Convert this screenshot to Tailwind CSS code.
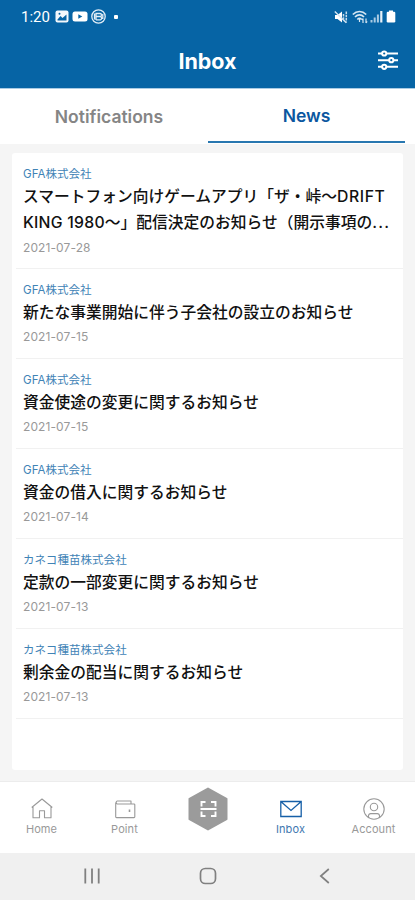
<!DOCTYPE html>
<html lang="ja">
<head>
<meta charset="utf-8">
<meta name="viewport" content="width=device-width, initial-scale=1">
<title>Inbox</title>
<script src="https://cdn.jsdelivr.net/npm/@tailwindcss/browser@4"></script>
</head>
<body class="flex h-[900px] w-[415px] flex-col overflow-hidden bg-[#f5f5f5] font-['Inter','Noto_Sans_CJK_JP',sans-serif]">
  <header class="h-[88px] shrink-0 bg-[#0664a5] text-white">
    <!-- Status bar -->
    <div class="flex h-[33px] items-center justify-between pl-[21px] pr-[19px]">
      <div class="flex items-center font-['Roboto',sans-serif]">
        <span class="w-[34px] text-[15px] leading-[18px]">1:20</span>
        <svg class="h-[13px] w-[14px]" viewBox="0 0 14 13"><rect x=".5" y=".5" width="13" height="12" rx="2" fill="#f3f8fc"/><path d="M2.5 9.5 5.5 6l2 2 4-3.500V10.500h-9z" fill="#0664a5"/><circle cx="4.500" cy="3.700" r="1" fill="#0664a5"/></svg>
        <svg class="ml-[3px] h-[11px] w-[16px]" viewBox="0 0 16 11"><rect x=".5" y=".5" width="15" height="10" rx="2.500" fill="#fff"/><path d="M6.300 3.300v4.400l4-2.200z" fill="#0664a5"/></svg>
        <svg class="ml-[3px] h-[15px] w-[15px]" viewBox="0 0 15 15" fill="none" stroke="#e3eef7" stroke-width="1.300"><circle cx="7.500" cy="7.500" r="6.700"/><path d="M5 11V4.500h4a1.500 1.500 0 0 1 0 3H5h4.300a1.700 1.700 0 0 1 0 3.300H5M3.500 4.500v6M11.800 5v5"/></svg>
        <span class="ml-[8px] h-1 w-1 rounded-[1px] bg-white"></span>
      </div>
      <div class="flex items-center">
        <svg class="h-[14px] w-[14px]" viewBox="0 0 14 14"><path d="M1 5h2.500L8 1.500v11L3.500 9H1z" fill="#fff"/><path d="m.8 1.500 11.500 11.300" stroke="#d8e8f4" stroke-width="1.400"/><path d="M9.500 4v6M12.300 1.500v11" fill="none" stroke="#c4dbec" stroke-width="1.500" stroke-dasharray="2.500 .8"/></svg>
        <svg class="ml-1 h-[14px] w-[16px]" viewBox="0 0 16 14" fill="none" stroke="#d6e6f2" stroke-width="1.700"><path d="M.8 4.500c4-4 9.400-4 13.400 0M3 7c2.700-2.800 6.300-2.800 9 0M5.300 9.500c1.400-1.300 3-1.300 4.400 0"/><path d="M7.500 9v3M11 13V8.500m0 0L9.800 10M14 8.500V13m0 0 1.200-1.500" stroke-width="1.200"/></svg>
        <svg class="ml-[2px] h-[13px] w-[13px]" viewBox="0 0 13 13" fill="#a9cbe4"><rect x=".5" y="10" width="2" height="2.500"/><rect x="3.700" y="7.500" width="2" height="5"/><rect x="6.900" y="4.500" width="2" height="8"/><rect x="10.200" y="1" width="2.200" height="11.500" fill="#e6f1f8"/></svg>
        <svg class="ml-[3px] h-[13px] w-[10px]" viewBox="0 0 10 13" fill="#fff"><rect x="3" y=".5" width="4" height="2.500"/><rect x=".7" y="1.800" width="8.600" height="10.700" rx="1.200"/></svg>
      </div>
    </div>
    <!-- Title bar -->
    <div class="grid h-[55px] grid-cols-[1fr_auto_1fr] items-center">
      <h1 class="col-start-2 pt-px text-[21.5px] font-bold leading-7">Inbox</h1>
      <svg class="mr-[17px] h-[22px] w-[20px] -translate-y-px justify-self-end" viewBox="0 0 20 22" fill="none" stroke="#fff" stroke-width="2"><path d="M0 4.500h4M8.500 4.500H20M0 11.200h11M15.500 11.200H20M0 17.800h4M8.500 17.800H20"/><circle cx="6.200" cy="4.500" r="2.100"/><circle cx="13.300" cy="11.200" r="2.100"/><circle cx="6.200" cy="17.800" r="2.100"/></svg>
    </div>
  </header>

  <nav class="flex h-[56px] shrink-0 border-t border-[#a9cbe4] bg-white pr-[10px] text-center">
    <div class="w-[208px] pl-[10px] pt-[15px] text-[17.5px] font-semibold leading-[26px] text-[#858585]">Notifications</div>
    <div class="mb-px flex-1 border-b-2 border-[#2877b0] pt-[14px] text-[17.5px] font-semibold leading-[26px] text-[#0b57a0]">News</div>
  </nav>

  <main class="flex min-h-0 flex-1 flex-col px-3 pb-[11px] pt-[9px]">
    <section class="flex-1 rounded-[3px] bg-white pl-1">
      <article class="border-b border-[#f1f1f1] pb-[12px] pl-[7px] pt-[13px]">
        <p class="text-[11.5px] leading-[17px] tracking-[0.05px] text-[#3f83b6]">GFA株式会社</p>
        <h2 class="mt-px whitespace-nowrap text-[15.75px] font-medium leading-[26px] text-[#111]">スマートフォン向けゲームアプリ「ザ・峠～<span class="tracking-[0.6px]">DRIFT</span><br><span class="tracking-[0.25px]">KING 1980</span>～」配信決定のお知らせ（開示事項の<span class="tracking-[1.2px]">...</span></h2>
        <p class="mt-1 text-[12px] leading-4 tracking-[0.1px] text-[#999]">2021-07-28</p>
      </article>
      <article class="border-b border-[#f1f1f1] pb-[12px] pl-[7px] pt-[13px]">
        <p class="text-[11.5px] leading-[17px] tracking-[0.05px] text-[#3f83b6]">GFA株式会社</p>
        <h2 class="mt-px text-[15.75px] font-medium leading-[26px] text-[#111]">新たな事業開始に伴う子会社の設立のお知らせ</h2>
        <p class="mt-[3px] pb-px text-[12px] leading-4 tracking-[0.1px] text-[#999]">2021-07-15</p>
      </article>
      <article class="border-b border-[#f1f1f1] pb-[12px] pl-[7px] pt-[13px]">
        <p class="text-[11.5px] leading-[17px] tracking-[0.05px] text-[#3f83b6]">GFA株式会社</p>
        <h2 class="mt-px text-[15.75px] font-medium leading-[26px] text-[#111]">資金使途の変更に関するお知らせ</h2>
        <p class="mt-[3px] pb-px text-[12px] leading-4 tracking-[0.1px] text-[#999]">2021-07-15</p>
      </article>
      <article class="border-b border-[#f1f1f1] pb-[12px] pl-[7px] pt-[13px]">
        <p class="text-[11.5px] leading-[17px] tracking-[0.05px] text-[#3f83b6]">GFA株式会社</p>
        <h2 class="mt-px text-[15.75px] font-medium leading-[26px] text-[#111]">資金の借入に関するお知らせ</h2>
        <p class="mt-[3px] pb-px text-[12px] leading-4 tracking-[0.1px] text-[#999]">2021-07-14</p>
      </article>
      <article class="border-b border-[#f1f1f1] pb-[12px] pl-[7px] pt-[13px]">
        <p class="text-[11.5px] leading-[17px] tracking-[0.05px] text-[#3f83b6]">カネコ種苗株式会社</p>
        <h2 class="mt-px text-[15.75px] font-medium leading-[26px] text-[#111]">定款の一部変更に関するお知らせ</h2>
        <p class="mt-[3px] pb-px text-[12px] leading-4 tracking-[0.1px] text-[#999]">2021-07-13</p>
      </article>
      <article class="border-b border-[#f1f1f1] pb-[12px] pl-[7px] pt-[13px]">
        <p class="text-[11.5px] leading-[17px] tracking-[0.05px] text-[#3f83b6]">カネコ種苗株式会社</p>
        <h2 class="mt-px text-[15.75px] font-medium leading-[26px] text-[#111]">剰余金の配当に関するお知らせ</h2>
        <p class="mt-[3px] pb-px text-[12px] leading-4 tracking-[0.1px] text-[#999]">2021-07-13</p>
      </article>
    </section>
  </main>

  <!-- App tabs -->
  <nav class="grid h-[72px] shrink-0 grid-cols-5 border-t border-[#ececec] bg-white text-center text-[11px] leading-[14px] text-[#999]">
    <div class="flex flex-col items-center pt-[16px]">
      <svg class="h-[22px] w-[22px]" viewBox="0 0 22 22" fill="none" stroke="#999" stroke-width="1.100" stroke-linejoin="round"><path d="M.7 9.500 11 1l10.300 8.500M2 8.500v11.300h6.500v-7h5v7H20V8.500"/></svg>
      <span class="mt-[2px] tracking-[0.1px]">Home</span>
    </div>
    <div class="flex flex-col items-center pt-[16px]">
      <svg class="h-[22px] w-[22px]" viewBox="0 0 22 22" fill="none" stroke="#999" stroke-width="1.100" stroke-linejoin="round"><path d="M17 6V3H3.200a1.600 1.600 0 0 0 0 3H20a.8.8 0 0 1 .8.8v12a.8.8 0 0 1-.8.800H2.500a.8.8 0 0 1-.8-.8V4.500"/><path d="M15.500 11.500v2.500" stroke-width="1.600"/></svg>
      <span class="mt-[2px] tracking-[0.1px]">Point</span>
    </div>
    <div class="flex flex-col items-center pt-[5px]">
      <svg class="h-[44px] w-[40px]" viewBox="0 0 40 44"><path d="M20 1.500 38.500 11.800V32.200L20 42.500 1.500 32.200V11.800z" fill="#9b9b9b" stroke="#9b9b9b" stroke-width="2" stroke-linejoin="round"/><path d="M17.500 15H13.500v4.500M23 15h4.500v4.500M13.500 24.500V29h4M27.500 24.500V29H23M12.500 22h16" fill="none" stroke="#fff" stroke-width="1.900"/></svg>
    </div>
    <div class="flex flex-col items-center pt-[16px] text-[#3f78b0]">
      <svg class="h-[22px] w-[22px]" viewBox="0 0 22 22" fill="none" stroke="#165fa7" stroke-width="1.300"><path d="M.8 3.500h20.400v15H.8zM.8 3.500 11 12.500 21.200 3.500"/></svg>
      <span class="mt-[2px] tracking-[0.1px]">Inbox</span>
    </div>
    <div class="flex flex-col items-center pt-[16px]">
      <svg class="h-[22px] w-[22px]" viewBox="0 0 22 22" fill="none" stroke="#999" stroke-width="1.100"><circle cx="11" cy="11" r="10.200"/><circle cx="11" cy="9" r="3.700"/><path d="M5.500 19.500v-1.700a2.200 2.200 0 0 1 2.200-2.200h6.600a2.200 2.200 0 0 1 2.200 2.200v1.700"/></svg>
      <span class="mt-[2px] tracking-[0.1px]">Account</span>
    </div>
  </nav>

  <!-- System navigation -->
  <footer class="flex h-[47px] shrink-0 items-center bg-[#f0f0f0] pl-[83px] pb-px text-[#808080]">
    <svg class="h-[18px] w-[18px]" viewBox="0 0 18 18" stroke="currentColor" stroke-width="1.800"><path d="M2.300 1.500v15M9 1.500v15M15.700 1.500v15"/></svg>
    <svg class="ml-[98px] h-[18px] w-[18px]" viewBox="0 0 18 18" fill="none" stroke="currentColor" stroke-width="1.700"><rect x="1.500" y="1.500" width="15" height="15" rx="4.800"/></svg>
    <svg class="ml-[99px] h-[18px] w-[18px]" viewBox="0 0 18 18" fill="none" stroke="currentColor" stroke-width="1.700"><path d="M12.800 2 4.800 9l8 7"/></svg>
  </footer>
</body>
</html>
